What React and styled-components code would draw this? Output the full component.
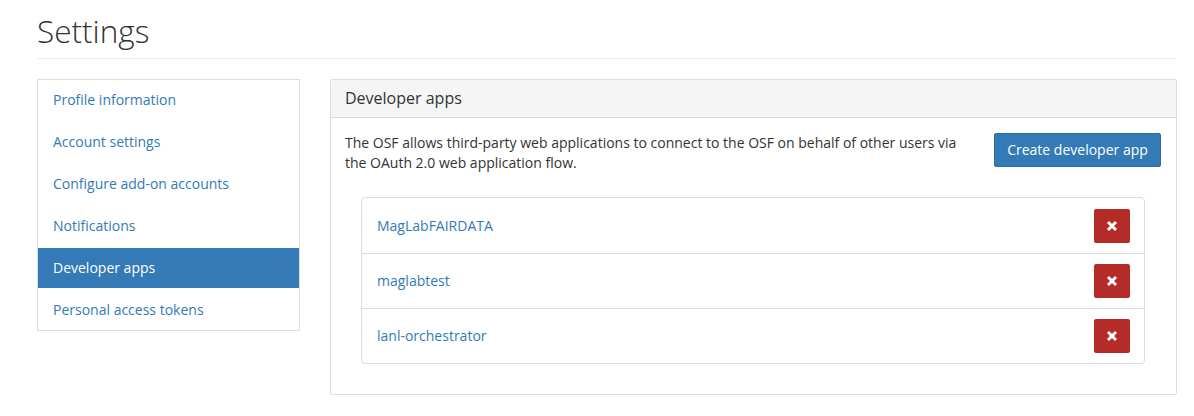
import React from "react";
import styled, { createGlobalStyle } from "styled-components";

const Global = createGlobalStyle`
  html, body { margin: 0; padding: 0; background: #fff; }
  body { font-family: "Open Sans", "Liberation Sans", sans-serif; font-size: 14px; line-height: 20px; color: #333; }
  * { box-sizing: border-box; }
`;

const Page = styled.div`
  padding: 0 17px 0 37px;
  width: 1194px;
`;

const Title = styled.h1`
  margin: 0;
  padding-top: 12px;
  padding-bottom: 8px;
  font-size: 31.5px;
  line-height: 38px;
  font-weight: 300;
  color: #333;
  border-bottom: 1px solid #eee;
`;

const Columns = styled.div`
  display: grid;
  grid-template-columns: 263px 847px;
  column-gap: 30px;
  margin-top: 20px;
  align-items: start;
`;

const Nav = styled.nav`
  border: 1px solid #ddd;
  display: flex;
  flex-direction: column;
`;

const NavItem = styled.a`
  display: block;
  height: ${(p) => (p.$active ? "40px" : "42px")};
  padding: ${(p) => (p.$active ? "0 15px" : p.$late ? "2px 15px 0" : "0 15px 2px")};
  line-height: 40px;
  font-size: 14px;
  color: ${(p) => (p.$active ? "#fff" : "#337ab7")};
  background: ${(p) => (p.$active ? "#337ab7" : "transparent")};
  text-decoration: none;
`;

const Panel = styled.section`
  border: 1px solid #ddd;
  border-radius: 2px;
`;

const PanelHeading = styled.div`
  background: #f5f5f5;
  border-bottom: 1px solid #ddd;
  padding: 0 14px;
  height: 38px;
  line-height: 37px;
  font-size: 16px;
  color: #333;
`;

const PanelBody = styled.div`
  padding: 15px 15px 15px 14px;
`;

const Intro = styled.div`
  display: flex;
  justify-content: space-between;
  align-items: flex-start;
  gap: 20px;
`;

const IntroText = styled.p`
  margin: 0;
  width: 620px;
  font-size: 14px;
  line-height: 20px;
  color: #333;
`;

const PrimaryButton = styled.button`
  height: 34px;
  width: 167px;
  padding: 0;
  border: 1px solid #2e6da4;
  border-radius: 2px;
  background: #337ab7;
  color: #fff;
  font-family: inherit;
  font-size: 14px;
  line-height: 32px;
`;

const AppList = styled.ul`
  list-style: none;
  margin: 24px 16px 15px 16px;
  padding: 0;
  border: 1px solid #ddd;
  border-radius: 4px;
`;

const AppRow = styled.li`
  display: flex;
  align-items: center;
  justify-content: space-between;
  height: 55px;
  padding: 0 14px 0 15px;
  border-top: ${(p) => (p.$first ? "none" : "1px solid #ddd")};
`;

const AppLink = styled.a`
  color: #337ab7;
  font-size: 14px;
  text-decoration: none;
`;

const DeleteButton = styled.button`
  width: 36px;
  height: 34px;
  padding: 0;
  border: none;
  border-radius: 2px;
  background: #b52b27;
  display: flex;
  align-items: center;
  justify-content: center;
`;

const XIcon = () => (
  <svg width="12" height="12" viewBox="0 0 12 12">
    <path d="M2 2 L10 10 M10 2 L2 10" stroke="#fff" strokeWidth="3" strokeLinecap="butt" />
  </svg>
);

const navItems = [
  "Profile information",
  "Account settings",
  "Configure add-on accounts",
  "Notifications",
  "Developer apps",
  "Personal access tokens",
];

const activeIndex = 4;

const apps = ["MagLabFAIRDATA", "maglabtest", "lanl-orchestrator"];

export default function App() {
  return (
    <>
      <Global />
      <Page>
        <Title>Settings</Title>
        <Columns>
          <Nav>
            {navItems.map((n, i) => (
              <NavItem key={n} href="#" $active={i === activeIndex} $late={i > activeIndex}>
                {n}
              </NavItem>
            ))}
          </Nav>
          <Panel>
            <PanelHeading>Developer apps</PanelHeading>
            <PanelBody>
              <Intro>
                <IntroText>
                  The OSF allows third-party web applications to connect to the OSF on behalf of other users via the OAuth 2.0 web application flow.
                </IntroText>
                <PrimaryButton>Create developer app</PrimaryButton>
              </Intro>
              <AppList>
                {apps.map((a, i) => (
                  <AppRow key={a} $first={i === 0}>
                    <AppLink href="#">{a}</AppLink>
                    <DeleteButton aria-label="Delete">
                      <XIcon />
                    </DeleteButton>
                  </AppRow>
                ))}
              </AppList>
            </PanelBody>
          </Panel>
        </Columns>
      </Page>
    </>
  );
}
